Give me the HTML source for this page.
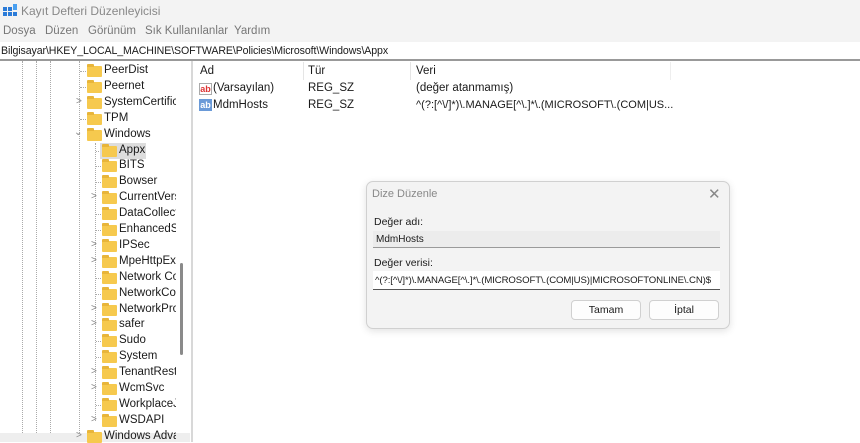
<!DOCTYPE html>
<html><head><meta charset="utf-8"><style>
*{margin:0;padding:0;box-sizing:border-box}
body{width:860px;height:442px;overflow:hidden;background:#fff;font-family:"Liberation Sans",sans-serif;font-size:11px;color:#1a1a1a;position:relative}
.a{position:absolute;white-space:nowrap}
.f{position:absolute;width:15px;height:11px;background:#f6c94e;border-radius:1px}
.f:before{content:"";position:absolute;left:0;top:-2px;width:7px;height:3px;background:#e8b53a;border-radius:1px 1px 0 0}
.ch{position:absolute;color:#888;font-size:10px}
.vl{position:absolute;width:0;border-left:1px dotted #aaa}
.hl{position:absolute;height:0;border-top:1px dotted #aaa;width:8px}
</style></head><body>
<div class="a" style="left:0;top:0;width:860px;height:22px;background:#f3f3f3"></div>
<svg class="a" style="left:3px;top:4px" width="14" height="14"><rect x="0" y="3" width="4" height="4" fill="#2b7bd8"/><rect x="5" y="3" width="4" height="4" fill="#2b7bd8"/><rect x="0" y="8" width="4" height="4" fill="#2b7bd8"/><rect x="5" y="8" width="4" height="4" fill="#2b7bd8"/><rect x="10" y="8" width="4" height="4" fill="#2b7bd8"/><rect x="10" y="0" width="4" height="6" fill="#4aa0f0"/></svg>
<div class="a" style="left:21px;top:4px;font-size:12px;color:#888">Kayıt Defteri Düzenleyicisi</div>
<div class="a" style="left:0;top:22px;width:860px;height:20px;background:#f3f3f3"></div>
<div class="a" style="left:3px;top:25px;font-size:11.5px;color:#777">Dosya</div>
<div class="a" style="left:45px;top:25px;font-size:11.5px;color:#777">Düzen</div>
<div class="a" style="left:88px;top:25px;font-size:11.5px;color:#777">Görünüm</div>
<div class="a" style="left:145px;top:25px;font-size:11.5px;color:#777">Sık Kullanılanlar</div>
<div class="a" style="left:234px;top:25px;font-size:11.5px;color:#777">Yardım</div>
<div class="a" style="left:0;top:42px;width:860px;height:19px;border-bottom:2px solid #999;background:#fff"></div>
<div class="a" style="left:1px;top:45px;font-size:10.6px;letter-spacing:-0.1px">Bilgisayar\HKEY_LOCAL_MACHINE\SOFTWARE\Policies\Microsoft\Windows\Appx</div>
<div class="vl" style="left:22px;top:61px;height:372px"></div>
<div class="vl" style="left:36px;top:61px;height:372px"></div>
<div class="vl" style="left:50px;top:61px;height:372px"></div>
<div class="vl" style="left:79px;top:61px;height:372px"></div>
<div class="vl" style="left:95px;top:143px;height:278px"></div>
<div class="a" style="left:191px;top:61px;width:2px;height:381px;background:#d8d8d8"></div>
<div class="a" style="left:180px;top:263px;width:3px;height:92px;background:#8a8a8a;border-radius:2px"></div>
<div class="a" style="left:0;top:433px;width:190px;height:9px;background:#eee"></div>
<div id="tree"></div>
<div class="a" style="left:200px;top:65px;font-size:11.5px">Ad</div>
<div class="a" style="left:303px;top:62px;width:1px;height:18px;background:#e5e5e5"></div>
<div class="a" style="left:308px;top:65px;font-size:11.5px">Tür</div>
<div class="a" style="left:410px;top:62px;width:1px;height:18px;background:#e5e5e5"></div>
<div class="a" style="left:416px;top:65px;font-size:11.5px">Veri</div>
<div class="a" style="left:670px;top:62px;width:1px;height:18px;background:#eee"></div>
<div class="a" style="left:199px;top:83px;width:13px;height:12px;border:1px solid #aaa;background:#fff;color:#d33;font-size:9px;font-weight:bold;line-height:10px;text-align:center">ab</div>
<div class="a" style="left:213px;top:82px;font-size:11.5px">(Varsayılan)</div>
<div class="a" style="left:308px;top:82px;font-size:11.5px">REG_SZ</div>
<div class="a" style="left:416px;top:82px;font-size:11.5px">(değer atanmamış)</div>
<div class="a" style="left:199px;top:99px;width:13px;height:12px;background:#6a9ad8;color:#fff;font-size:9px;font-weight:bold;line-height:12px;text-align:center">ab</div>
<div class="a" style="left:213px;top:99px;font-size:11.5px">MdmHosts</div>
<div class="a" style="left:308px;top:99px;font-size:11.5px">REG_SZ</div>
<div class="a" style="left:416px;top:99px;font-size:11px">^(?:[^\/]*)\.MANAGE[^\.]*\.(MICROSOFT\.(COM|US...</div>
<div class="a" style="left:366px;top:181px;width:364px;height:148px;background:#f3f3f3;border:1px solid #d0d0d0;border-radius:7px;box-shadow:0 2px 8px rgba(0,0,0,.12)"></div>
<div class="a" style="left:372px;top:188px;font-size:11px;color:#888">Dize Düzenle</div>
<div class="a" style="left:708px;top:185px;font-size:15px;color:#888">✕</div>
<div class="a" style="left:374px;top:216px;font-size:10.5px">Değer adı:</div>
<div class="a" style="left:373px;top:231px;width:347px;height:17px;background:#ececec;border-bottom:1px solid #9a9a9a"></div>
<div class="a" style="left:376px;top:234px;font-size:10px">MdmHosts</div>
<div class="a" style="left:374px;top:257px;font-size:10.5px">Değer verisi:</div>
<div class="a" style="left:373px;top:271px;width:347px;height:19px;background:#fff;border-bottom:1px solid #555"></div>
<div class="a" style="left:375px;top:275px;font-size:9.6px;letter-spacing:-0.1px">^(?:[^\/]*)\.MANAGE[^\.]*\.(MICROSOFT\.(COM|US)|MICROSOFTONLINE\.CN)$</div>
<div class="a" style="left:571px;top:300px;width:70px;height:20px;background:#fdfdfd;border:1px solid #d0d0d0;border-radius:4px;text-align:center;line-height:18px;font-size:10.5px">Tamam</div>
<div class="a" style="left:649px;top:300px;width:70px;height:20px;background:#fdfdfd;border:1px solid #d0d0d0;border-radius:4px;text-align:center;line-height:18px;font-size:10.5px">İptal</div>
<script>
var rows=[["PeerDist",0,0],["Peernet",0,0],["SystemCertifica",0,1],["TPM",0,0],["Windows",0,2],["Appx",1,0],["BITS",1,0],["Bowser",1,0],["CurrentVersi",1,1],["DataCollect",1,0],["EnhancedSt",1,0],["IPSec",1,1],["MpeHttpExt",1,1],["Network Co",1,0],["NetworkCon",1,0],["NetworkPro",1,1],["safer",1,1],["Sudo",1,0],["System",1,0],["TenantRestr",1,1],["WcmSvc",1,1],["WorkplaceJ",1,0],["WSDAPI",1,1],["Windows Adva",0,1]];
var h="";
rows.forEach(function(r,i){var y=63+i*15.9;var fx=r[1]==1?102:87;
var hx=r[1]==1?96:80;
if(r[2]==0)h+='<div class="hl" style="left:'+hx+'px;top:'+(y+8)+'px;width:'+(fx-hx-1)+'px"></div>';
if(i==5)h+='<div class="a" style="left:100px;top:'+(y)+'px;width:46px;height:16px;background:#ddd"></div>';
if(r[2]==1)h+='<div class="ch" style="left:'+(fx-11)+'px;top:'+(y+1)+'px">&gt;</div>';
if(r[2]==2)h+='<div class="ch" style="left:'+(fx-13)+'px;top:'+(y)+'px">⌄</div>';
h+='<div class="f" style="left:'+fx+'px;top:'+(y+3)+'px"></div>';
h+='<div class="a" style="left:'+(fx+17)+'px;top:'+(y+1)+'px;font-size:11.5px;width:'+(176-fx-17)+'px;overflow:hidden">'+r[0]+'</div>';});
document.getElementById("tree").innerHTML=h;
</script>
</body></html>
